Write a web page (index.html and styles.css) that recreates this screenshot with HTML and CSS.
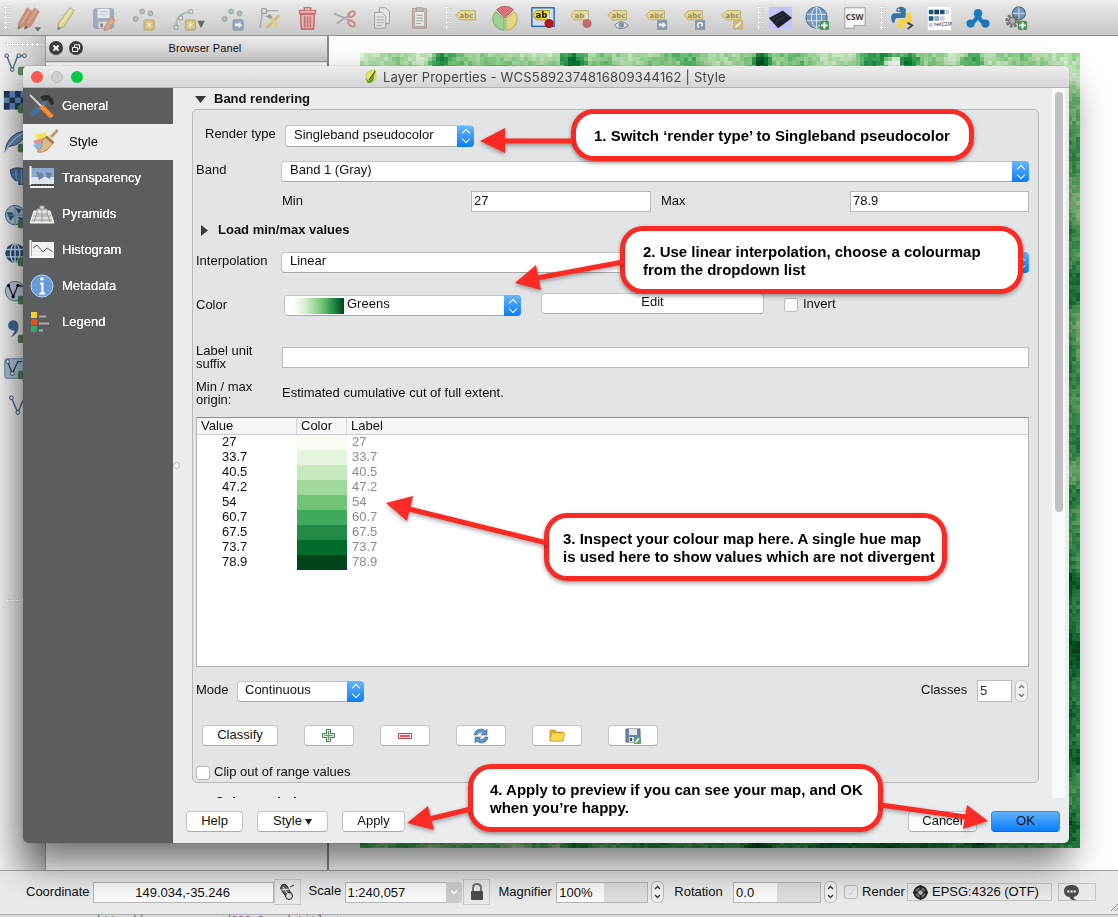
FILE: index.html
```html
<!DOCTYPE html>
<html lang="en">
<head>
<meta charset="utf-8">
<title>Layer Properties</title>
<link rel="stylesheet" href="styles.css">
</head>
<body>
<div class="app">
  <header class="toolbar">
    <i class="grip"></i>
    <span class="tool w38 dim"><svg viewBox="0 0 28 28"><g fill="#c8643c" stroke="#8a5540" stroke-width=".8"><path d="M12 3l6 4-10 16-6 3 1-7z"/><path d="M20 3l5 4-9 16-7 3 1-7z"/></g><path d="M16 4L6 20M22 5l-9 15" stroke="#e6a080"/><path d="M2 26l1-4 2 2zM9 26l1-4 3 2z" fill="#333"/><path d="M20 24h7l-3.500 5z" fill="#333"/></svg></span>
    <span class="tool w36 dim"><svg viewBox="0 0 28 28"><path d="M18 3l5 3-11 17-7 4 1-8z" fill="#ded860" stroke="#8b8848"/><path d="M20 5L8 22" stroke="#f6f3a8" stroke-width="1.500"/><path d="M5 27l.5-4 3 2z" fill="#444"/></svg></span>
    <span class="tool w39 dim"><svg viewBox="0 0 28 28"><rect x="3" y="4" width="21" height="21" rx="2" fill="#7b92ad" stroke="#61768d"/><path d="M7 4h13v10H7z" fill="#eee"/><path d="M9 7h9M9 10h9" stroke="#aaa"/><path d="M8 18h11v7H8z" fill="#ddd"/><path d="M10 20h3v4h-3z" fill="#556"/><path d="M22 13l4 3-7 10-5 2 1-5z" fill="#df8d55" stroke="#a8643c"/></svg></span>
    <span class="tool w41 dim"><svg viewBox="0 0 28 28"><g fill="#8fb596" stroke="#628068"><circle cx="5" cy="15" r="2.600"/><circle cx="12" cy="7" r="2.600"/><circle cx="21" cy="9" r="2.600"/></g><rect x="14" y="16" width="11" height="11" rx="1.500" fill="#d3b645" stroke="#a68d30"/><path d="M19.500 18v7M16.500 19.700l6 3.600M16.500 23.300l6-3.600" stroke="#fff"/></svg></span>
    <span class="tool w50 dim"><svg class="wide" viewBox="0 0 36 28"><path d="M4 25C4 14 8 9 20 7" fill="none" stroke="#83ab8b" stroke-width="2"/><path d="M7 12h4v4H7zM18 5h4v4h-4zM2 22h4v4H2z" fill="#ddd" stroke="#777"/><rect x="14" y="16" width="11" height="11" rx="1.500" fill="#d3b645" stroke="#a68d30"/><path d="M19.500 18v7M16.500 19.700l6 3.600M16.500 23.300l6-3.600" stroke="#fff"/><path d="M27 17h8l-4 8z" fill="#222"/></svg></span>
    <span class="tool w38 dim"><svg viewBox="0 0 28 28"><g fill="#8fb596" stroke="#628068"><circle cx="5" cy="15" r="2.600"/><circle cx="12" cy="7" r="2.600"/><circle cx="21" cy="9" r="2.600"/></g><rect x="14" y="16" width="11" height="11" rx="1.500" fill="#6f8ba8" stroke="#566f89"/><path d="M16 20h4v-2l4 3.500-4 3.500v-2h-4z" fill="#fff"/></svg></span>
    <span class="tool w37 dim"><svg viewBox="0 0 28 28"><path d="M5 7L2 25M7 6h15" stroke="#8a8a8a" stroke-width="1.500"/><path d="M4 4h5v5H4z" fill="#ddd" stroke="#555"/><path d="M9 25L23 11" stroke="#cfae3c" stroke-width="3"/><path d="M12 12l9 12" stroke="#ded04c" stroke-width="3"/><path d="M8 12l5-2 3 3-3 2z" fill="#777"/></svg></span>
    <span class="tool w37 dim"><svg viewBox="0 0 28 28"><g fill="#e5a3a3" stroke="#c22a2a" stroke-width="1.700"><path d="M6 10h15l-1 16H7z"/><path d="M5 6h17v3H5zM10 6V3h7v3M10.500 12v12M13.500 12v12M16.500 12v12" fill="none"/></g></svg></span>
    <span class="tool w38 dim"><svg viewBox="0 0 28 28"><path d="M2 9l18 8M5 20L20 10" stroke="#8c8c8c" stroke-width="2"/><g fill="none" stroke="#bb5d5d" stroke-width="2"><ellipse cx="21" cy="10" rx="4" ry="2.500" transform="rotate(-35 21 10)"/><ellipse cx="21" cy="20" rx="4" ry="2.500" transform="rotate(35 21 20)"/></g></svg></span>
    <span class="tool w37 dim"><svg viewBox="0 0 28 28"><g fill="#eee" stroke="#777"><path d="M10 3h7l4 4v13H10z"/><path d="M5 8h8l4 4v13H5z"/></g><path d="M7 13h8M7 16h8M7 19h8M7 22h6" stroke="#888"/></svg></span>
    <span class="tool w38 dim"><svg viewBox="0 0 28 28"><path d="M6 4h15v21H6z" fill="#c9b07e" stroke="#8c7446"/><path d="M8 7h11v16H8z" fill="#f4f4f4" stroke="#888"/><path d="M10 3h7v4h-7z" fill="#aaa" stroke="#777"/><path d="M10 11h7M10 14h7M10 17h7M10 20h5" stroke="#777"/></svg></span>
    <i class="grip labels"></i>
    <span class="tool w30 dim"><svg viewBox="0 0 28 28"><path d="M3 11l5-5h16v10H8z" fill="#ead75c" stroke="#9c8f36"/><text x="7" y="14" class="abc">abc</text></svg></span>
    <span class="tool w39 pie soft"><svg viewBox="0 0 28 28"><path d="M14 14L5 5a13 13 0 0118 0z" fill="#db5a60" stroke="#a84449"/><path d="M13 15v12A12 12 0 014 7z" fill="#8fd27b" stroke="#5f9b51"/><path d="M15 15v12a12 12 0 009-20z" fill="#ead76c" stroke="#a8994a"/></svg></span>
    <span class="tool w38"><svg viewBox="0 0 28 28"><rect x="2" y="3" width="24" height="20" fill="#d3dcec" stroke="#2369b5" stroke-width="1.500"/><path d="M3 11l4-5h14v10H7z" fill="#f3df2e" stroke="#a89a17"/><text x="6" y="14" class="abc dark">ab</text><path d="M20 9v9" stroke="#eee" stroke-width="2"/><circle cx="20.500" cy="20" r="5" fill="#b31616"/></svg></span>
    <span class="tool w38 dim"><svg viewBox="0 0 28 28"><path d="M3 11l4-5h15v10H7z" fill="#ead75c" stroke="#9c8f36"/><text x="7" y="14" class="abc">ab</text><path d="M20 9v9" stroke="#eee" stroke-width="2"/><circle cx="20.500" cy="20" r="5" fill="#b82828"/></svg></span>
    <span class="tool w38 dim"><svg viewBox="0 0 28 28"><path d="M2 11l5-5h15v10H7z" fill="#ead75c" stroke="#9c8f36"/><text x="6" y="14" class="abc">abc</text><path d="M9 22q7-8 15 0-8 7-15 0z" fill="#eee" stroke="#345"/><circle cx="16.500" cy="21.500" r="3" fill="#47729f"/></svg></span>
    <span class="tool w38 dim"><svg viewBox="0 0 28 28"><path d="M2 11l5-5h15v10H7z" fill="#ead75c" stroke="#9c8f36"/><text x="6" y="14" class="abc">abc</text><rect x="14" y="16" width="11" height="11" rx="1" fill="#587592"/><path d="M16 20h4v-2l4 3.500-4 3.500v-2h-4z" fill="#fff"/></svg></span>
    <span class="tool w38 dim"><svg viewBox="0 0 28 28"><path d="M2 11l5-5h15v10H7z" fill="#ead75c" stroke="#9c8f36"/><text x="6" y="14" class="abc">abc</text><rect x="14" y="16" width="11" height="11" rx="1" fill="#587592"/><path d="M18 25q-3-6 2-6 3 1 1 4" fill="none" stroke="#fff" stroke-width="1.800"/></svg></span>
    <span class="tool w38 dim"><svg viewBox="0 0 28 28"><path d="M2 11l5-5h15v10H7z" fill="#ead75c" stroke="#9c8f36"/><text x="6" y="14" class="abc">abc</text><rect x="14" y="16" width="11" height="11" rx="1" fill="#c9a93e"/><path d="M16 25l1-3 5-4 1 2-5 4z" fill="#fff"/></svg></span>
    <i class="grip web"></i>
    <span class="tool w33"><svg viewBox="0 0 28 28"><path d="M2 2h25v24H2z" fill="#c7c5f7"/><path d="M2 14L17 6l10 8-15 11z" fill="#20242c"/><path d="M6 15l11-6M9 19l12-8" stroke="#343b47"/></svg></span>
    <span class="tool w38 after"><svg viewBox="0 0 28 28"><circle cx="13.500" cy="13.500" r="11.500" fill="#7699c0" stroke="#4a6c91"/><path d="M3 10h21M3 17h21M13.500 2v23" stroke="#dfe9f4"/><ellipse cx="13.500" cy="13.500" rx="5.500" ry="11" fill="none" stroke="#dfe9f4"/><rect x="17" y="17" width="10" height="10" rx="2" fill="#4c9459"/><path d="M22 18.500v7M18.500 22h7" stroke="#fff" stroke-width="2"/></svg></span>
    <span class="tool w38"><svg viewBox="0 0 28 28"><path d="M3 3h22v19H13v3H3z" fill="#f7f7f7" stroke="#999"/><text x="4" y="16" class="csw">CSW</text></svg></span>
    <i class="grip py"></i>
    <span class="tool w32"><svg viewBox="0 0 28 28"><path d="M8 7V4q5-4 10 0v8q0 2-3 2H9q-3 0-3 5H4q-4-7 1-10h8V8z" fill="#3474a8"/><circle cx="10.500" cy="5" r="1" fill="#fff"/><path d="M19 8h3q5 5 1 12h-8v2h4q-1 4-7 3-4-1-3-6 0-3 4-4h4q2-1 2-4z" fill="#f6d44a"/><path d="M20 19l5 3-5 4" fill="none" stroke="#444" stroke-width="2"/></svg></span>
    <span class="tool w38 after"><svg viewBox="0 0 28 28"><path d="M2 2h25v25H2z" fill="#fff"/><path d="M3 5h5v5H3zM3 12h5v5H3zM15 5h5v5h-5z" fill="#155b78"/><path d="M9 5h5v5H9z" fill="#223f63"/><path d="M9 12h5v5H9z" fill="#8fa7c4"/><path d="M15 12h5v5h-5zM21 5h4v5h-4zM3 19h4v5H3z" fill="#ccd"/><text x="8" y="23" class="cdf">netCDF</text></svg></span>
    <span class="tool w39"><svg viewBox="0 0 28 28"><path d="M6 20q7-3 8-11 1 8 8 11" fill="none" stroke="#1978bd" stroke-width="4.500"/><g fill="#1978bd"><circle cx="14" cy="9" r="4.600"/><circle cx="6" cy="20" r="4.400"/><circle cx="22" cy="20" r="4.400"/></g></svg></span>
    <span class="tool w39"><svg viewBox="0 0 28 28"><circle cx="16" cy="9" r="7" fill="#7299be" stroke="#345"/><path d="M9 9h14M16 2v14" stroke="#dde"/><circle cx="9" cy="17" r="6" fill="none" stroke="#747474" stroke-width="3" stroke-dasharray="3 1.500"/><circle cx="9" cy="17" r="4" fill="#aaa" stroke="#555"/><rect x="15" y="17" width="10" height="10" rx="2" fill="#4c9459"/><path d="M20 18.500v7M16.500 22h7" stroke="#fff" stroke-width="2"/></svg></span>
  </header>

  <main class="workspace">
    <nav class="layer-tools">
      <i class="hgrip"></i>
      <svg viewBox="0 0 28 28"><path d="M4 4l6 15 6-15h8" fill="none" stroke="#456782" stroke-width="1.500"/><g fill="#cfd8e0" stroke="#345570"><circle cx="4" cy="4" r="2"/><circle cx="10" cy="19" r="2"/><circle cx="17" cy="4" r="2"/><circle cx="23" cy="4" r="2"/></g><rect x="16" y="16" width="9" height="9" rx="2" fill="#5a8a60"/></svg>
      <svg viewBox="0 0 28 28"><path d="M1 1h24v20H1z" fill="#5d82b4"/><path d="M1 1h6v7H1zM13 1h6v7h-6zM7 8h6v6H7zM19 8h6v6h-6zM1 14h6v7H1zM13 14h6v7h-6z" fill="#1f3856"/><rect x="16" y="16" width="9" height="9" rx="2" fill="#4f7a55"/></svg>
      <svg viewBox="0 0 28 28"><path d="M2 26Q4 6 24 3q-1 15-18 17z" fill="#6486ad" stroke="#324c68"/><path d="M2 26Q8 13 21 6" stroke="#dde" fill="none"/><rect x="16" y="17" width="9" height="9" rx="2" fill="#4f7a55"/></svg>
      <svg viewBox="0 0 28 28"><path d="M8 4q8-4 16 0v16h-7v-5l-3 1q-6-3-6-12z" fill="#456f9b" stroke="#27425f"/><path d="M14 4v9l3 2M20 4v16" stroke="#9ab" fill="none"/></svg>
      <svg viewBox="0 0 28 28"><circle cx="13" cy="12" r="10.500" fill="#9fb7cf" stroke="#3c5d80"/><path d="M4 9h6l2 4-4 5zM13 4l7 2-3 5zM16 14l6 1-3 5z" fill="#36506c"/><path d="M2 12h22M13 2v20" stroke="#6d8ba9"/><rect x="16" y="17" width="9" height="9" rx="2" fill="#4f7a55"/></svg>
      <svg viewBox="0 0 28 28"><circle cx="13" cy="12" r="10.500" fill="#2b4a70"/><path d="M3 8h20M3 16h20M13 2v20" stroke="#c3d4e6" stroke-width="1.500"/><ellipse cx="13" cy="12" rx="5" ry="10" fill="none" stroke="#c3d4e6" stroke-width="1.500"/><rect x="16" y="17" width="9" height="9" rx="2" fill="#4f7a55"/></svg>
      <svg viewBox="0 0 28 28"><circle cx="13" cy="12" r="10.500" fill="#b7c6d5" stroke="#49698b"/><path d="M6 6l5 12 5-12 5 1" stroke="#222" stroke-width="1.500" fill="none"/><circle cx="6" cy="6" r="1.700"/><circle cx="11" cy="18" r="1.700"/><circle cx="16" cy="6" r="1.700"/><rect x="16" y="17" width="9" height="9" rx="2" fill="#4f7a55"/></svg>
      <svg viewBox="0 0 28 28"><circle cx="11" cy="8" r="5.500" fill="#42678f"/><path d="M16 6q3 10-8 15 6-6 4-12z" fill="#42678f"/><rect x="16" y="18" width="9" height="9" rx="2" fill="#4f7a55"/></svg>
      <svg viewBox="0 0 28 28"><rect x="2" y="3" width="22" height="21" rx="2" fill="#a5bdd2" stroke="#5e7b98"/><path d="M5 6l5 13 6-13h5" fill="none" stroke="#345" stroke-width="1.500"/><circle cx="5" cy="6" r="2" fill="#def" stroke="#345"/><circle cx="10" cy="19" r="2" fill="#def" stroke="#345"/><rect x="16" y="16" width="9" height="9" rx="2" fill="#4f7a55"/></svg>
      <svg viewBox="0 0 28 28"><path d="M9 4l7 16 6-14" fill="none" stroke="#456782" stroke-width="1.500"/><circle cx="9" cy="4" r="2" fill="#def" stroke="#345"/><circle cx="16" cy="20" r="2" fill="#def" stroke="#345"/></svg>
      <i class="hgrip low"></i>
    </nav>
    <aside class="browser">
      <div class="panel-head">
        <svg viewBox="0 0 14 14"><circle cx="7" cy="7" r="7" fill="#3d3d3d"/><path d="M4.500 4.500l5 5M9.500 4.500l-5 5" stroke="#fff" stroke-width="2"/></svg>
        <svg viewBox="0 0 14 14"><circle cx="7" cy="7" r="7" fill="#3d3d3d"/><path d="M3.500 6.500h5v4h-5zM5.500 6V3.800h5V8H9" fill="none" stroke="#fff"/></svg>
        <span>Browser Panel</span>
      </div>
      <div class="panel-body"></div>
    </aside>
    <section class="map-view"><canvas id="raster" width="720" height="795"></canvas></section>
  </main>

  <footer class="statusbar">
    <span>Coordinate</span><div class="field coord">149.034,-35.246</div>
    <div class="iconbox"><svg viewBox="0 0 20 20"><path d="M5 3q-3 3 0 6l5 7 5-3-5-9q-2-3-5-1z" fill="#666" stroke="#222"/><circle cx="12" cy="14" r="3.500" fill="#ddd" stroke="#222"/><path d="M6 5l6 9M4 8l9-1M12 6l4-3" stroke="#eee"/><path d="M13 5l4-2" stroke="#333"/></svg></div>
    <span class="scale-label">Scale</span><div class="field scale">1:240,057</div><div class="drop"><svg viewBox="0 0 10 10"><path d="M2 3.500l3 3 3-3" fill="none" stroke="#fff" stroke-width="1.500"/></svg></div>
    <div class="iconbox lock"><svg viewBox="0 0 20 20"><path d="M6 10V6q0-4 4-4t4 4v4" fill="none" stroke="#777" stroke-width="2"/><rect x="4" y="9" width="12" height="9" rx="1" fill="#4c4c4c"/></svg></div>
    <span class="mag-label">Magnifier</span><div class="field mag">100%</div>
    <svg class="spin" viewBox="0 0 13 22"><rect x=".5" y=".5" width="12" height="21" rx="5" fill="#f4f4f4" stroke="#b5b5b5"/><path d="M4 8l2.500-2.500L9 8M4 14l2.500 2.500L9 14" fill="none" stroke="#333" stroke-width="1.300"/></svg>
    <span class="rot-label">Rotation</span><div class="field rot">0.0</div>
    <svg class="spin" viewBox="0 0 13 22"><rect x=".5" y=".5" width="12" height="21" rx="5" fill="#f4f4f4" stroke="#b5b5b5"/><path d="M4 8l2.500-2.500L9 8M4 14l2.500 2.500L9 14" fill="none" stroke="#333" stroke-width="1.300"/></svg>
    <i class="check faded"><svg viewBox="0 0 14 14"><path d="M3.500 7.500l2.500 3 4.500-7" fill="none" stroke="#ccc"/></svg></i><span class="render-label">Render</span>
    <div class="crs"><svg viewBox="0 0 16 16"><circle cx="8" cy="8" r="6.500" fill="#777" stroke="#222" stroke-width="2"/><path d="M8 0v16M0 8h16" stroke="#222" stroke-width="2"/><circle cx="8" cy="8" r="3" fill="#bbb" stroke="#222"/></svg>EPSG:4326 (OTF)</div>
    <div class="bubble"><svg viewBox="0 0 16 16"><path d="M8 1c4 0 7 2 7 5.500S12 12 10 12q0 3 3 3-6 1-7-3C3 12 1 10 1 6.500S4 1 8 1z" fill="#4b4b4b"/><path d="M4 7h2M7 7h2M10 7h2" stroke="#fff" stroke-width="2"/></svg></div>
    <svg class="resize" viewBox="0 0 8 8"><path d="M1 8l7-7M5 8l3-3" stroke="#888"/></svg>
  </footer>
  <div class="under"><span class="u-green">http://www</span><span class="u-purple">&lt;/OGC_Coord:title:&gt;</span></div>
</div>

<div class="dialog">
  <div class="titlebar">
    <i class="light red"></i><i class="light grey"></i><i class="light green"></i>
    <div class="title"><svg viewBox="0 0 15 16"><path d="M2 5q4-4 10-4l1 9q-3 5-9 4z" fill="#e9e45a" stroke="#b7b63c" stroke-width=".6"/><path d="M1 10l4 3 7-12-2 11-3 3H4z" fill="#5e9d31"/><path d="M5 12L12 2" stroke="#2f4f1b"/></svg>Layer Properties - WCS5892374816809344162 | Style</div>
  </div>
  <div class="dialog-body">
    <nav class="sidebar">
      <div class="nav-item"><svg viewBox="0 0 26 26"><path d="M3 22L17 9" stroke="#3d73a8" stroke-width="4.500"/><path d="M11 4q8-5 13 2l1 5-3 1-3-5-5 1z" fill="#2b2e2f"/><path d="M1 2l12 12" stroke="#cfcfcf" stroke-width="2"/><path d="M12 13l11 11" stroke="#e8832b" stroke-width="5"/><path d="M12 13l11 11" stroke="#f6b474" stroke-width="1"/></svg>General</div>
      <div class="nav-item active"><svg viewBox="0 0 26 26"><path d="M3 6l11-3 3 9-10 10z" fill="#f1e45c"/><path d="M1 12l13-4 1 7-9 4z" fill="#ec8c93"/><path d="M1 16l8-3 5 5-8 4z" fill="#8fb9e0"/><path d="M26 1l-7 7" stroke="#c29a62" stroke-width="3"/><path d="M15 7l7 6-7 8q-4 3-10 2 6-5 5-11z" fill="#dbb986" stroke="#b58e58"/><path d="M14 8l7 6" stroke="#9a7444" stroke-width="2"/></svg>Style</div>
      <div class="nav-item"><svg viewBox="0 0 26 26"><path d="M2 3h23v16H2z" fill="#8fa8cd"/><path d="M2 12h23v7H2z" fill="#dce4ec"/><path d="M7 7l6 1 2 4-5 3zM17 7l6 1-2 6-4-2z" fill="#6f83a3"/><path d="M1.500 1v19M1 22h24" stroke="#f1f1f1" stroke-width="2"/><path d="M2 20h23" stroke="#333" stroke-dasharray="2 1"/></svg>Transparency</div>
      <div class="nav-item"><svg viewBox="0 0 26 26"><path d="M5 10h16l4 12H1z" fill="#e1e1dc" stroke="#fff"/><path d="M8 8h10v5H8zM11 5h4v4h-4z" fill="#e6e6e3" stroke="#999"/><path d="M4 15h18M3 19h20M8 12l-3 9M13 10v11M18 12l3 9" stroke="#999"/></svg>Pyramids</div>
      <div class="nav-item"><svg viewBox="0 0 26 26"><path d="M3 5h22v14H3z" fill="#eef0f2"/><path d="M1.500 3v17H25" stroke="#f7f7f7" stroke-width="2" fill="none"/><path d="M4 11l4-3 6 7 4-4 6 4" fill="none" stroke="#5c6876"/></svg>Histogram</div>
      <div class="nav-item"><svg viewBox="0 0 26 26"><circle cx="13" cy="13" r="11" fill="#699bdb" stroke="#b5d3f3"/><circle cx="13" cy="6" r="1.800" fill="#fff"/><path d="M11 10.500h2.500V20M10.500 20.500h5.500" stroke="#fff" stroke-width="2" fill="none"/></svg>Metadata</div>
      <div class="nav-item"><svg viewBox="0 0 26 26"><path d="M2 3h6v6H2z" fill="#f5cf27"/><path d="M2 10h6v6H2z" fill="#e54f1c"/><path d="M2 17h6v6H2z" fill="#34a866"/><path d="M10 7.500h7M10 14.500h10M10 21.500h4" stroke="#aaa" stroke-width="2"/></svg>Legend</div>
    </nav>
    <div class="content">
      <i class="splitter"></i>
      <div class="scroll">
        <div class="pane">
          <h2 class="group-title"><svg viewBox="0 0 12 8"><path d="M0 0h11L5.500 7z" fill="#3b3b3b"/></svg>Band rendering</h2>
          <div class="group">
            <div class="row render"><label>Render type</label><div class="combo"><span>Singleband pseudocolor</span><b class="stepper"></b></div></div>
            <div class="row band"><label>Band</label><div class="combo"><span>Band 1 (Gray)</span><b class="stepper"></b></div></div>
            <div class="row minmax"><label>Min</label><div class="input">27</div><label>Max</label><div class="input">78.9</div></div>
            <h3 class="row load"><svg viewBox="0 0 8 12"><path d="M0 0l7 5.500L0 11z" fill="#3b3b3b"/></svg>Load min/max values</h3>
            <div class="row interp"><label>Interpolation</label><div class="combo"><span>Linear</span><b class="stepper"></b></div></div>
            <div class="row color"><label>Color</label><div class="combo ramp"><i></i><span>Greens</span><b class="stepper"></b></div><div class="button edit">Edit</div><i class="check"></i><label class="invert">Invert</label></div>
            <div class="row suffix"><label>Label unit<br>suffix</label><div class="input"></div></div>
            <div class="row origin"><label>Min / max<br>origin:</label><span>Estimated cumulative cut of full extent.</span></div>
            <div class="table">
              <div class="thead"><span>Value</span><span>Color</span><span>Label</span></div>
              <div class="tr"><span>27</span><i class="g1"></i><em>27</em></div>
              <div class="tr"><span>33.7</span><i class="g2"></i><em>33.7</em></div>
              <div class="tr"><span>40.5</span><i class="g3"></i><em>40.5</em></div>
              <div class="tr"><span>47.2</span><i class="g4"></i><em>47.2</em></div>
              <div class="tr"><span>54</span><i class="g5"></i><em>54</em></div>
              <div class="tr"><span>60.7</span><i class="g6"></i><em>60.7</em></div>
              <div class="tr"><span>67.5</span><i class="g7"></i><em>67.5</em></div>
              <div class="tr"><span>73.7</span><i class="g8"></i><em>73.7</em></div>
              <div class="tr"><span>78.9</span><i class="g9"></i><em>78.9</em></div>
            </div>
            <div class="row mode"><label>Mode</label><div class="combo"><span>Continuous</span><b class="stepper"></b></div><label class="classes">Classes</label><div class="input count">5</div><svg class="spin" viewBox="0 0 13 22"><rect x=".5" y=".5" width="12" height="21" rx="5" fill="#f1f1f1" stroke="#c3c3c3"/><path d="M4 8l2.500-2.500L9 8M4 14l2.500 2.500L9 14" fill="none" stroke="#777" stroke-width="1.300"/></svg></div>
            <div class="row actions">
              <div class="button classify">Classify</div>
              <div class="button ico"><svg viewBox="0 0 16 16"><path d="M5.500 1.500h4v4h4v4h-4v4h-4v-4h-4v-4h4z" fill="#fff" stroke="#3c7a46"/><path d="M7.500 3v9M3 7.500h9" stroke="#5fa468" stroke-width="1.600"/></svg></div>
              <div class="button ico"><svg viewBox="0 0 16 16"><path d="M1.500 5.500h13v5h-13z" fill="#fff" stroke="#c0474d"/><path d="M3 8h10" stroke="#e25b63" stroke-width="2.400"/></svg></div>
              <div class="button ico"><svg viewBox="0 0 16 16"><path d="M1 7q1-6 7-6 3 0 4 2l2-2v6H8l2-2Q6 3 4 7zM15 9q-1 6-7 6-3 0-4-2l-2 2V9h6l-2 2q4 2 6-2z" fill="#6193c6" stroke="#3c6a9b" stroke-width=".6"/></svg></div>
              <div class="button ico"><svg viewBox="0 0 16 16"><path d="M1 13V2h5l1 2h7v9z" fill="#d9ae31" stroke="#b98f23" stroke-width=".7"/><path d="M1 13L3 5h13l-2 8z" fill="#fadb54" stroke="#c9a02c" stroke-width=".7"/></svg></div>
              <div class="button ico"><svg viewBox="0 0 16 16"><path d="M1 1h14v13H1z" fill="#6787ad" stroke="#4f6a8a"/><path d="M4 1h8v6H4z" fill="#e5e9ee"/><path d="M4 9h7v5H4z" fill="#d5dade"/><path d="M5 10h2v3H5z" fill="#445"/><path d="M9 9h7v7H9z" fill="#63a36b"/><path d="M10.500 14.500l3.500-4" stroke="#fff" stroke-width="1.600"/></svg></div>
            </div>
            <div class="row clip"><i class="check"></i><label>Clip out of range values</label></div>
          </div>
          <h2 class="next-title">Color rendering</h2>
        </div>
        <div class="track"><i class="thumb"></i></div>
      </div>
      <div class="buttons">
        <div class="button help">Help</div><div class="button style">Style <svg viewBox="0 0 7 6"><path d="M0 0h7L3.500 6z" fill="#222"/></svg></div><div class="button apply">Apply</div><div class="button cancel">Cancel</div><div class="button ok">OK</div>
      </div>
    </div>
  </div>
</div>

<div class="callout c1">1. Switch ‘render type’ to Singleband pseudocolor</div>
<div class="callout c2">2. Use linear interpolation, choose a colourmap<br>from the dropdown list</div>
<div class="callout c3">3. Inspect your colour map here. A single hue map<br>is used here to show values which are not divergent</div>
<div class="callout c4">4. Apply to preview if you can see your map, and OK<br>when you’re happy.</div>
<svg class="arrows" viewBox="0 0 1118 917">
  <g stroke="#fb2a24" stroke-width="5"><path d="M573 141h-70M623 262l-86 16M547 543l-138-34M471 809l-42 10M881 805l85 12"/></g>
  <g fill="#fb2a24"><path d="M480 141l25-13v25zM515 283l21-18 5 25zM386 503l27-7-6 25zM407 823l21-17 6 24zM988 821l-21-16-4 24z"/></g>
</svg>
<script src="raster.js"></script>
</body>
</html>
```
FILE: styles.css
```css
* { box-sizing: border-box; }
body { margin: 0; width: 1118px; height: 917px; position: relative; overflow: hidden; background: #fff; font: 13px/16px "Liberation Sans", Arial, sans-serif; color: #111; }
svg { display: block; flex: none; }
h2, h3 { margin: 0; font-size: 13px; font-weight: bold; }
i, em { font-style: normal; flex: none; }
span, label { white-space: nowrap; }

.app { display: flex; flex-direction: column; width: 1118px; height: 917px; }
.toolbar { display: flex; align-items: center; height: 36px; padding-left: 4px; background: linear-gradient(#f2f2f2 0, #e6e6e6 4px, #c9c9ca 34px); border-bottom: 1px solid #8d8d8d; }
.grip { width: 6px; height: 24px; background: radial-gradient(circle at 1.5px 1.5px, #fff 1px, #b8b8b8 1.5px, transparent 2px) 0 0 / 5px 5px; }
.grip.labels { margin-left: 6px; } .grip.web { margin-left: 5px; } .grip.py { margin-left: 6px; }
.tool { display: flex; flex: none; justify-content: center; }
.tool svg { width: 26px; height: 26px; }
.tool svg.wide { width: 34px; }
.w30 { width: 30px; } .w32 { width: 32px; } .w33 { width: 33px; } .w36 { width: 36px; } .w37 { width: 37px; } .w38 { width: 38px; } .w39 { width: 39px; } .w41 { width: 41px; } .w50 { width: 50px; }
.pie { margin-left: 4px; } .after { margin-left: 2px; }
.dim { opacity: .6; } .soft { opacity: .8; }
.abc { font: bold 7.5px "DejaVu Sans", sans-serif; fill: #665c20; }
.abc.dark { fill: #111; font-size: 9px; }
.csw { font: bold 9px "Open Sans", sans-serif; fill: #444; }
.cdf { font: 5.5px "DejaVu Sans", sans-serif; fill: #222; }

.workspace { display: flex; height: 835px; border-bottom: 1px solid #a5a5a5; }
.layer-tools { width: 46px; height: 834px; background: linear-gradient(90deg, #f0f0f0, #dcdcdd 50%, #c2c2c3); border-right: 1px solid #999; display: flex; flex-direction: column; gap: 12px; padding: 7px 0 0 3px; }
.layer-tools svg { width: 26px; height: 26px; }
.hgrip { height: 5px; width: 36px; margin: 0 0 -8px 3px; background: radial-gradient(circle at 1.5px 1.5px, #fff 1px, #b8b8b8 1.5px, transparent 2px) 0 0 / 5px 5px; }
.hgrip.low { margin-top: 167px; }
.browser { width: 283px; display: flex; flex-direction: column; border-right: 2px solid #8b8b8c; }
.panel-head { height: 26px; display: flex; align-items: center; padding: 0 0 1px 3px; gap: 6px; background: linear-gradient(#ededed, #c7c7c8); border-bottom: 1px solid #9a9a9a; }
.panel-head svg { width: 14px; height: 14px; }
.panel-head span { flex: 1; text-align: center; padding-right: 6px; font-size: 11px; letter-spacing: .1px; }
.panel-body { flex: 1; background: #fbfbfb; border-top: 1px solid #e5e5e5; }
.map-view { flex: 1; background: #fff; padding: 17px 0 0 31px; }
.map-view canvas { display: block; }

.statusbar { height: 43px; display: flex; align-items: center; padding: 0 0 1px 26px; background: #e9eaeb; }
.field { height: 21px; border: 1px solid #b7b7b7; background: #fbfbfb; padding: 1px 3px; line-height: 17px; white-space: nowrap; flex: none; }
.coord { width: 181px; margin-left: 3px; text-align: center; padding-right: 4px; }
.iconbox { width: 27px; height: 26px; border: 1px solid #c9c9c9; display: flex; align-items: center; justify-content: center; flex: none; }
.iconbox svg { width: 20px; height: 20px; }
.scale-label { margin-left: 8px; width: 36px; padding-bottom: 2px; }
.scale { width: 101px; border-right: 0; padding-left: 2px; }
.drop { width: 17px; height: 21px; background: #cdcecf; border-radius: 0 4px 4px 0; display: flex; align-items: center; justify-content: center; }
.drop svg { width: 10px; }
.lock { margin-left: 1px; }
.mag-label { margin-left: 8px; width: 58px; }
.mag { width: 92px; padding-left: 2px; background: linear-gradient(90deg, #fbfbfb 47px, #dedfe0 47px); }
.spin { width: 13px; height: 22px; margin-left: 3px; }
.rot-label { margin-left: 10px; width: 59px; }
.rot { width: 88px; padding-left: 2px; background: linear-gradient(90deg, #fbfbfb 43px, #dedfe0 43px); }
.check { display: block; width: 14px; height: 14px; background: #fff; border: 1px solid #b9babb; border-radius: 3px; }
.faded { background: #ececec; margin-left: 7px; }
.faded svg { width: 12px; height: 12px; }
.render-label { width: 45px; margin-left: 4px; }
.crs { display: flex; align-items: center; gap: 4px; width: 145px; height: 18px; border: 1px solid #c5c5c5; padding-left: 5px; white-space: nowrap; flex: none; }
.crs svg { width: 15px; height: 15px; }
.bubble { width: 38px; height: 18px; border: 1px solid #c5c5c5; margin-left: 6px; padding-left: 4px; flex: none; }
.bubble svg { width: 17px; height: 17px; }
.resize { width: 8px; height: 8px; margin: 30px 0 0 14px; }
.under { height: 3px; border-top: 1px solid #a9a9a9; background: #dadbdc; overflow: hidden; display: flex; font: 11px/11px "Liberation Mono", monospace; }
.u-green { color: #2c7050; margin-left: 97px; width: 121px; }
.u-purple { color: #9a2f9d; }

.dialog { position: absolute; left: 23px; top: 66px; width: 1046px; height: 777px; border-radius: 5px; display: flex; flex-direction: column; overflow: hidden; background: #ebecee; }
.app::after { content: ""; position: absolute; left: 23px; top: 66px; width: 1046px; height: 777px; border-radius: 5px; box-shadow: 0 20px 38px rgba(0,0,0,.56), 0 0 1px rgba(0,0,0,.5); }
.titlebar { height: 22px; display: flex; align-items: center; padding-left: 8px; gap: 8px; background: linear-gradient(#ededee, #d4d5d6); border-bottom: 1px solid #b3b3b4; }
.light { width: 12px; height: 12px; border-radius: 50%; }
.red { background: #fc5753; } .grey { background: #cecfcf; border: 1px solid #bcbcbc; } .green { background: #07c946; }
.title { display: flex; align-items: center; gap: 5px; margin-left: 273px; color: #454545; font: 13px/20px Inter, sans-serif; letter-spacing: .18px; white-space: nowrap; }
.title svg { width: 14px; height: 15px; }
.dialog-body { display: flex; height: 755px; }
.sidebar { width: 150px; background: #5c5d5e; color: #fff; }
.nav-item { display: flex; align-items: center; gap: 7px; height: 36px; padding: 0 0 1px 6px; text-shadow: 0 0 .5px currentColor; }
.nav-item svg { width: 26px; height: 26px; }
.nav-item.active { background: #ebecee; color: #000; padding-left: 9px; gap: 11px; text-shadow: none; }

.content { flex: 1; display: flex; flex-direction: column; position: relative; }
.splitter { position: absolute; left: 0; top: 374px; width: 7px; height: 7px; border-radius: 50%; border: 1px solid #bbb; background: #f7f7f7; }
.scroll { display: flex; height: 710px; overflow: hidden; }
.pane { width: 879px; padding-left: 19px; height: 710px; overflow: hidden; }
.track { width: 13px; background: #f9fafa; padding: 4px 0 0 3px; }
.thumb { display: block; width: 8px; height: 420px; border-radius: 4px; background: #c1c1c2; }
.group-title { height: 21px; display: flex; align-items: center; gap: 7px; padding-left: 3px; }
.group-title svg { width: 12px; height: 8px; margin-top: 3px; }
.group { width: 847px; height: 674px; border: 1px solid #b9babb; border-radius: 5px; background: #e3e4e6; }
.row { display: flex; align-items: center; padding-left: 3px; height: 21px; }
.combo { display: flex; align-items: center; height: 21px; background: #fff; border: 1px solid #c3c4c5; border-bottom-color: #a9aaab; border-radius: 4px; padding-left: 8px; flex: none; }
.combo span { flex: 1; padding-bottom: 3px; }
.stepper { width: 17px; height: 21px; margin-right: -1px; border-radius: 0 4px 4px 0; background: linear-gradient(#6bb5fb, #087dfa); display: flex; flex-direction: column; align-items: center; justify-content: center; gap: 4px; }
.stepper::before, .stepper::after { content: ""; width: 5px; height: 5px; border: solid #fff; border-width: 1px 0 0 1px; transform: rotate(45deg); margin-bottom: -2px; }
.stepper::after { transform: rotate(225deg); margin: -2px 0 0; }
.input { height: 21px; background: #fff; border: 1px solid #b9babb; padding-left: 2px; line-height: 18px; flex: none; }
.button { height: 21px; border: 1px solid #c3c4c5; border-bottom-color: #a9aaab; border-radius: 4px; background: #fff; display: flex; align-items: center; justify-content: center; padding-bottom: 2px; flex: none; }

.render { margin-top: 15px; height: 22px; padding-left: 12px; }
.render label { width: 80px; padding-bottom: 5px; }
.render .combo { width: 189px; height: 22px; }
.band { margin-top: 14px; }
.band label, .interp label { width: 85px; padding-bottom: 3px; }
.band .combo, .interp .combo { width: 748px; }
.minmax { margin-top: 9px; padding-left: 89px; }
.minmax label { width: 189px; padding-bottom: 1px; }
.minmax .input { width: 180px; }
.minmax .input + label { margin-left: 10px; }
.minmax .input:last-child { width: 179px; }
.load { margin-top: 8px; height: 20px; gap: 9px; padding-left: 8px; }
.load svg { width: 8px; height: 12px; margin-top: 2px; }
.interp { margin-top: 12px; }
.color { margin-top: 20px; height: 23px; }
.color label:first-child { width: 88px; }
.ramp { width: 237px; margin-top: 2px; }
.ramp i { width: 51px; height: 16px; margin-right: 3px; background: linear-gradient(90deg, #fff, #d3eecd 25%, #7bc87c 55%, #238b45 80%, #00441b); }
.edit { width: 223px; margin: -2px 20px 0; padding-bottom: 4px; }
.invert { margin-left: 5px; padding-bottom: 2px; }
.suffix { margin-top: 31px; }
.suffix label, .origin label { width: 86px; line-height: 13px; }
.suffix label { padding-bottom: 2px; }
.suffix .input { width: 747px; }
.origin { margin-top: 12px; height: 26px; }
.table { margin: 11px 0 0 3px; width: 833px; height: 250px; background: #fff; border: 1px solid #b3b4b5; border-top-color: #8d8e8f; }
.thead { display: flex; height: 17px; line-height: 15px; background: #f5f6f7; border-bottom: 1px solid #cccdce; }
.thead span { width: 50px; padding-left: 4px; border-left: 1px solid #d0d8e0; }
.thead span:first-child { width: 99px; border: 0; }
.tr { display: flex; height: 15px; line-height: 13px; }
.tr span { width: 100px; padding-left: 25px; }
.tr i { width: 50px; height: 15px; }
.tr em { margin-left: 5px; color: #8c8c8e; }
.g1 { background: #f7fcf5; } .g2 { background: #e5f5e0; } .g3 { background: #c7e9c0; } .g4 { background: #a1d99b; } .g5 { background: #74c476; } .g6 { background: #41ab5d; } .g7 { background: #238b45; } .g8 { background: #006d2c; } .g9 { background: #00441b; }
.mode { margin-top: 13px; height: 22px; }
.mode label { width: 41px; padding-bottom: 3px; }
.mode .combo { width: 127px; padding-left: 7px; }
.mode .classes { width: 56px; margin-left: 557px; }
.count { width: 35px; height: 22px; line-height: 20px; color: #333; }
.actions { margin-top: 23px; padding-left: 9px; }
.classify { width: 76px; }
.ico { width: 50px; margin-left: 26px; padding-bottom: 0; }
.ico svg { width: 16px; height: 16px; }
.clip { margin-top: 20px; height: 14px; gap: 4px; }
.clip label { padding-bottom: 3px; }
.next-title { padding: 11px 0 0 23px; }
.buttons { display: flex; padding: 13px 9px 0 13px; height: 45px; }
.help { width: 57px; } .style { width: 71px; margin-left: 14px; gap: 3px; } .style svg { width: 7px; height: 6px; margin-top: 2px; }
.apply { width: 63px; margin-left: 14px; } .cancel { width: 69px; margin-left: auto; }
.ok { width: 69px; margin-left: 14px; background: linear-gradient(#62b1fa, #087dfb); border-color: #2d8eef #2d8eef #0b6fdb; }

.callout { position: absolute; border: 5px solid #fb2a24; border-radius: 23px; background: #fff; color: #000; font-size: 15px; font-weight: bold; line-height: 18px; white-space: nowrap; box-shadow: 0 2px 4px rgba(0,0,0,.4); }
.c1 { left: 571px; top: 109px; width: 403px; height: 52px; padding: 13px 0 0 18px; }
.c2 { left: 620px; top: 226px; width: 403px; height: 68px; padding: 12px 0 0 18px; }
.c3 { left: 544px; top: 513px; width: 403px; height: 68px; padding: 12px 0 0 14px; }
.c4 { left: 468px; top: 764px; width: 415px; height: 68px; padding: 12px 0 0 17px; }
.arrows { position: absolute; left: 0; top: 0; width: 1118px; height: 917px; filter: drop-shadow(0 2px 2px rgba(0,0,0,.35)); }
```
FILE: raster.js
```js
// Paints a single-hue raster layer: smooth noise mapped on the Greens ramp.
const ramp = [[247,252,245],[229,245,224],[199,233,192],[161,217,155],[116,196,118],[65,171,93],[35,139,69],[0,109,44],[0,68,27]];
const ctx = document.getElementById('raster').getContext('2d');
const cell = 4;
// local features: x, y, half width, strength
const spots = [[213, 5, 14, 0.65], [402, 9, 9, 0.55], [510, 3, 14, 0.5], [530, 3, 9, 0.35], [550, 9, 9, 0.55], [612, 9, 11, 0.4], [78, 8, 10, 0.35], [533, 9, 8, -0.7], [60, 4, 20, -0.3]];

function hash(x, y) {
  const n = Math.sin(x * 127.1 + y * 311.7) * 43758.5453;
  return n - Math.floor(n);
}
function smooth(x, y) {
  const ix = Math.floor(x), iy = Math.floor(y), fx = x - ix, fy = y - iy;
  const a = hash(ix, iy) * (1 - fx) + hash(ix + 1, iy) * fx;
  const b = hash(ix, iy + 1) * (1 - fx) + hash(ix + 1, iy + 1) * fx;
  return a * (1 - fy) + b * fy;
}
for (let y = 0; y < 795; y += cell) {
  for (let x = 0; x < 720; x += cell) {
    let base = 0.38;
    if (y > 20) base = y < 520 ? 0.38 + Math.min(y, 200) / 900 : 0.78;
    if (y > 780) base = x < 200 ? 0.45 : Math.min(0.82, 0.5 + x / 1400);
    let v = base + (smooth(x / 22, y / 22) - 0.5) * 0.45 + (hash(x, y + 7) - 0.5) * 0.16;
    for (const [sx, sy, r, s] of spots) {
      const d = Math.hypot(x + 2 - sx, y + 2 - sy);
      if (d < r) v += s * (1 - (d / r) * 0.6);
    }
    const t = Math.max(0, Math.min(0.999, v)) * 8, i = Math.floor(t), f = t - i;
    const c = ramp[i].map((p, k) => Math.round(p + (ramp[i + 1][k] - p) * f));
    ctx.fillStyle = `rgb(${c})`;
    ctx.fillRect(x, y, cell, cell);
  }
}
```
